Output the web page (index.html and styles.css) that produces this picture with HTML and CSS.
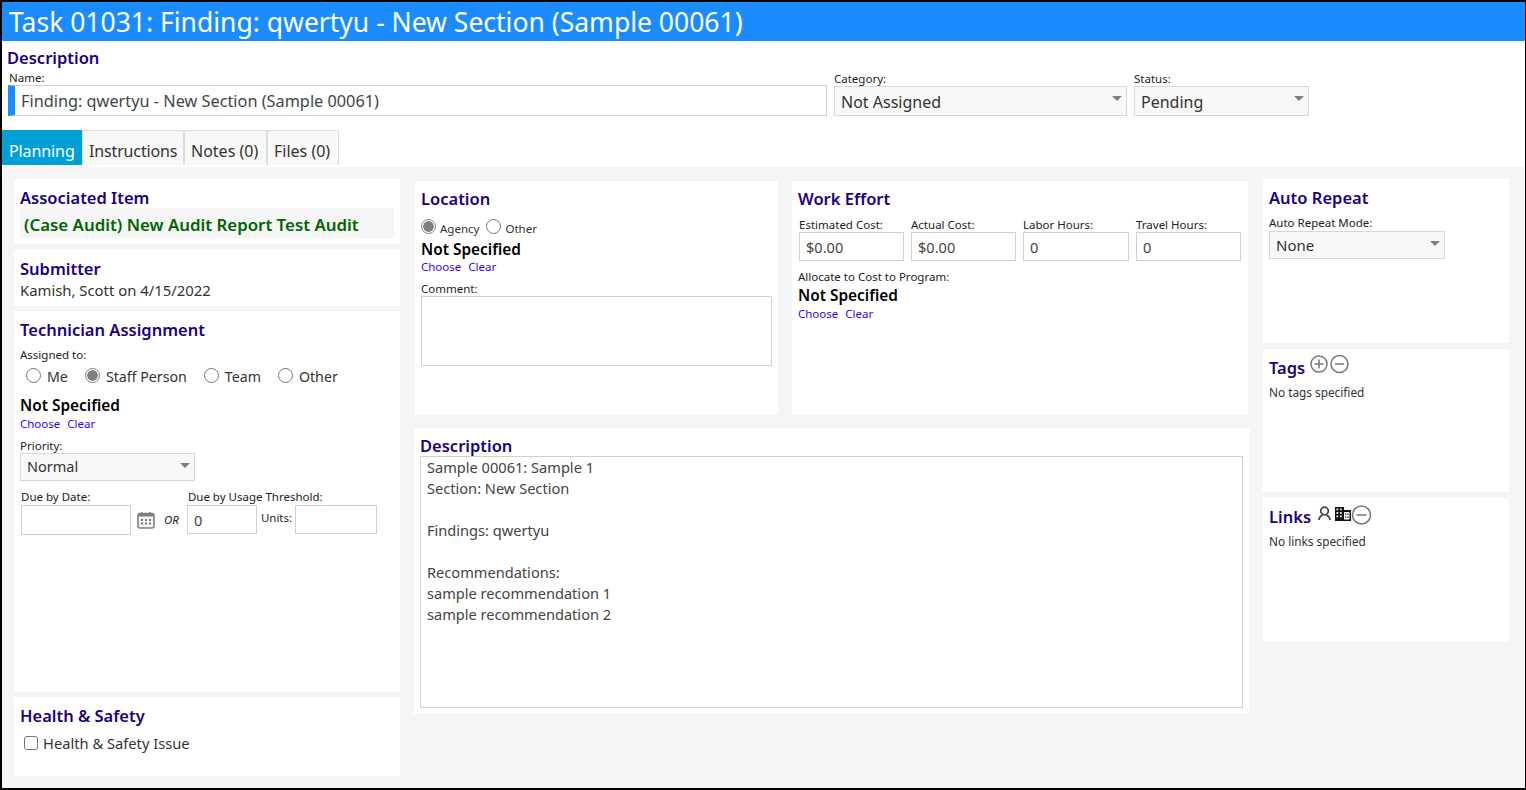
FILE: index.html
```html
<!DOCTYPE html>
<html lang="en">
<head>
  <meta charset="UTF-8">
  <title>Task 01031</title>
  <link rel="stylesheet" href="styles.css">
</head>
<body>
  <div class="window">
    <div class="title-bar">Task 01031: Finding: qwertyu - New Section (Sample 00061)</div>

    <div class="top-form">
      <h2 class="head">Description</h2>
      <div class="top-fields">
        <div class="field name-field">
          <label>Name:</label>
          <input class="txt name-input" type="text" value="Finding: qwertyu - New Section (Sample 00061)">
        </div>
        <div class="field category-field">
          <label>Category:</label>
          <div class="dropdown">Not Assigned</div>
        </div>
        <div class="field status-field">
          <label>Status:</label>
          <div class="dropdown">Pending</div>
        </div>
      </div>
    </div>

    <div class="tabs">
      <div class="tab active">Planning</div>
      <div class="tab">Instructions</div>
      <div class="tab">Notes (0)</div>
      <div class="tab">Files (0)</div>
    </div>

    <div class="panel">
      <!-- left column -->
      <div class="col col-left">
        <div class="card card-assoc">
          <h2 class="head">Associated Item</h2>
          <div class="assoc-item">(Case Audit) New Audit Report Test Audit</div>
        </div>
        <div class="card card-submitter">
          <h2 class="head">Submitter</h2>
          <div class="plain">Kamish, Scott on 4/15/2022</div>
        </div>
        <div class="card card-tech">
          <h2 class="head">Technician Assignment</h2>
          <label class="assigned-label">Assigned to:</label>
          <div class="assign-radios">
            <span class="opt"><input type="radio" name="assign">Me</span>
            <span class="opt"><input type="radio" name="assign" checked>Staff Person</span>
            <span class="opt"><input type="radio" name="assign">Team</span>
            <span class="opt"><input type="radio" name="assign">Other</span>
          </div>
          <div class="not-spec tech-spec">Not Specified</div>
          <div class="links"><a>Choose</a><a>Clear</a></div>
          <label class="priority-label">Priority:</label>
          <div class="dropdown priority">Normal</div>
          <div class="due-row">
            <div class="field">
              <label>Due by Date:</label>
              <input class="txt due-date" type="text">
            </div>
            <svg class="cal" width="18" height="18" viewBox="0 0 18 18">
              <rect x="1" y="2.5" width="16" height="14.5" rx="2" fill="#f4f4f4" stroke="#808080" stroke-width="1.6"/>
              <rect x="1" y="2.5" width="16" height="3" fill="#808080"/>
              <path d="M5 1v3M13 1v3" stroke="#808080" stroke-width="1.5"/>
              <path d="M4 8h2v2H4zM8 8h2v2H8zM12 8h2v2h-2zM4 11.5h2v2H4zM8 11.5h2v2H8zM12 11.5h2v2h-2z" fill="#777"/>
            </svg>
            <span class="or">OR</span>
            <div class="field usage-field">
              <label>Due by Usage Threshold:</label>
              <div class="usage-row">
                <input class="txt usage" type="text" value="0">
                <span class="units">Units:</span>
                <input class="txt units-input" type="text">
              </div>
            </div>
          </div>
        </div>
        <div class="card card-health">
          <h2 class="head">Health &amp; Safety</h2>
          <div class="check-row"><input type="checkbox">Health &amp; Safety Issue</div>
        </div>
      </div>

      <!-- middle column -->
      <div class="col col-mid">
        <div class="mid-top">
          <div class="card card-location">
            <h2 class="head">Location</h2>
            <div class="loc-radios">
              <input type="radio" name="loc" checked><span>Agency</span>
              <input type="radio" name="loc"><span>Other</span>
            </div>
            <div class="not-spec">Not Specified</div>
            <div class="links"><a>Choose</a><a>Clear</a></div>
            <label class="comment-label">Comment:</label>
            <textarea class="comment"></textarea>
          </div>
          <div class="card card-work">
            <h2 class="head">Work Effort</h2>
            <div class="cost-row">
              <div class="field"><label>Estimated Cost:</label><input class="txt cost" type="text" value="$0.00"></div>
              <div class="field"><label>Actual Cost:</label><input class="txt cost" type="text" value="$0.00"></div>
              <div class="field"><label>Labor Hours:</label><input class="txt cost cost-wide" type="text" value="0"></div>
              <div class="field"><label>Travel Hours:</label><input class="txt cost" type="text" value="0"></div>
            </div>
            <label class="alloc-label">Allocate to Cost to Program:</label>
            <div class="not-spec">Not Specified</div>
            <div class="links"><a>Choose</a><a>Clear</a></div>
          </div>
        </div>
        <div class="card card-desc">
          <h2 class="head">Description</h2>
          <div class="desc-box">Sample 00061: Sample 1
Section: New Section

Findings: qwertyu

Recommendations:
sample recommendation 1
sample recommendation 2</div>
        </div>
      </div>

      <!-- right column -->
      <div class="col col-right">
        <div class="card card-repeat">
          <h2 class="head">Auto Repeat</h2>
          <label class="repeat-label">Auto Repeat Mode:</label>
          <div class="dropdown repeat">None</div>
        </div>
        <div class="card card-tags">
          <div class="head-row">
            <h2 class="head">Tags</h2>
            <svg class="ico" width="40" height="20" viewBox="0 0 40 20">
              <circle cx="9" cy="9" r="8" fill="none" stroke="#777" stroke-width="1.5"/>
              <path d="M4.500 9h9M9 4.500v9" stroke="#777" stroke-width="1.5"/>
              <circle cx="29.500" cy="9" r="8.500" fill="none" stroke="#777" stroke-width="1.5"/>
              <path d="M25 9h9" stroke="#777" stroke-width="1.5"/>
            </svg>
          </div>
          <div class="small">No tags specified</div>
        </div>
        <div class="card card-links">
          <div class="head-row">
            <h2 class="head">Links</h2>
            <svg class="ico ico-links" width="54" height="22" viewBox="0 0 54 22">
              <circle cx="6.500" cy="7" r="3.800" fill="none" stroke="#444" stroke-width="1.700"/>
              <path d="M1 16c0-3 1.500-4 3.500-5M12 16c0-3-1.500-4-3.500-5" fill="none" stroke="#444" stroke-width="1.700"/>
              <path d="M17 3h9v3h7v11H17z" fill="#111"/>
              <path d="M26 8h5.500v7.500H26z" fill="#fff"/>
              <path d="M18.500 4.500h1.700v1.700h-1.700zM22 4.500h1.700v1.700H22zM18.500 8h1.700v1.700h-1.700zM22 8h1.700v1.700H22zM18.500 11.500h1.700v1.700h-1.700zM22 11.500h1.700v1.700H22z" fill="#fff"/>
              <path d="M27 9.500h1.300v1.300H27zM29.300 9.500h1.300v1.300h-1.300zM27 12.500h1.300v1.300H27zM29.300 12.500h1.300v1.300h-1.300z" fill="#111"/>
              <circle cx="43.500" cy="11" r="9" fill="none" stroke="#777" stroke-width="1.500"/>
              <path d="M38.500 11h10" stroke="#777" stroke-width="1.500"/>
            </svg>
          </div>
          <div class="small">No links specified</div>
        </div>
      </div>
    </div>
  </div>
</body>
</html>
```

FILE: styles.css
```css
* {
  box-sizing: border-box;
}
html, body {
  height: 100%;
}
body {
  margin: 0;
  background: #000;
  font-family: "Noto Sans", "Open Sans", sans-serif;
  font-size: 15px;
  color: #333;
}
.window {
  margin: 2px 1px 2px 2px;
  height: 786px;
  background: #fff;
  display: flex;
  flex-direction: column;
  overflow: hidden;
}
.title-bar {
  height: 39px;
  background: #1a8cff;
  color: #fff;
  font-size: 26.500px;
  line-height: 40px;
  padding-left: 7px;
  white-space: nowrap;
}
.head {
  margin: 0;
  font-size: 16.500px;
  line-height: 22px;
  font-weight: 600;
  color: #1c0080;
}
label {
  display: block;
  font-size: 11.500px;
  line-height: 14px;
  color: #222;
}
.top-form {
  padding: 6px 0 0 6px;
  height: 89px;
}
.top-form .head {
  margin-left: -1px;
}
.top-fields {
  display: flex;
  margin-top: 2px;
}
.name-field label,
.usage-field label {
  padding-left: 1px;
}
.name-field {
  width: 826px;
}
.category-field {
  width: 293px;
  margin: 1px 7px 0 0;
}
.status-field {
  width: 175px;
  margin-top: 1px;
}
.txt {
  display: block;
  height: 30px;
  border: 1px solid #d0d0d0;
  background: #fff;
  font: inherit;
  font-size: 14.600px;
  color: #444;
  padding: 0 6px;
  outline: none;
  border-radius: 0;
}
.name-input {
  width: 819px;
  height: 31px;
  border-left: 7px solid #1a8cff;
  padding: 1px 6px 0;
  font-size: 16.300px;
}
.dropdown {
  position: relative;
  height: 30px;
  border: 1px solid #d8d8d8;
  background: #f8f8f8;
  font-size: 16px;
  line-height: 31px;
  padding-left: 6px;
  color: #333;
}
.dropdown::after {
  content: "";
  position: absolute;
  right: 4px;
  top: 9px;
  border-left: 5px solid transparent;
  border-right: 5px solid transparent;
  border-top: 5px solid #808080;
}
.tabs {
  display: flex;
  height: 35px;
  flex-shrink: 0;
}
.tab {
  border: 1px solid #ddd;
  border-bottom: none;
  background: #f8f8f8;
  font-size: 16px;
  line-height: 40px;
  padding: 0 6px;
  color: #333;
  height: 35px;
  white-space: nowrap;
}
.tab.active {
  width: 80px;
  background: #009fd6;
  border-color: #009fd6;
  color: #fff;
  letter-spacing: -0.100px;
}
.tab:nth-child(2) { width: 102px; letter-spacing: -0.150px; }
.tab:nth-child(3) { width: 83px; }
.tab:nth-child(4) { width: 72px; }
.panel {
  flex: 1;
  background: #f5f5f5;
  display: flex;
  align-items: flex-start;
  padding: 12px 0 0 12px;
  margin-top: 2px;
}
.col {
  display: flex;
  flex-direction: column;
}
.col-left {
  width: 386px;
  margin-right: 14px;
  gap: 5px;
}
.col-mid {
  width: 835px;
  margin-right: 14px;
  gap: 14px;
}
.col-right {
  width: 246px;
  gap: 6px;
}
.card {
  background: #fff;
  padding: 8px 6px;
}
.card-assoc {
  height: 65px;
  margin-bottom: 1px;
  padding-top: 9px;
}
.card-assoc .head {
  line-height: 20px;
}
.card-submitter {
  height: 56px;
  padding-top: 8px;
}
.card-tech { height: 381px; }
.card-health { height: 79px; }
.assoc-item {
  background: #f5f5f5;
  height: 30px;
  padding-left: 4px;
  font-size: 16.850px;
  line-height: 33px;
  font-weight: 600;
  color: #006400;
  white-space: nowrap;
}
.plain {
  font-size: 14.850px;
  line-height: 20px;
}
.assigned-label {
  margin-top: 7px;
}
.assign-radios {
  display: flex;
  margin-top: 3px;
  padding-left: 6px;
  height: 24px;
  font-size: 14.200px;
  line-height: 24px;
}
.opt {
  display: flex;
  align-items: center;
  margin-right: 17px;
}
input[type="radio"] {
  appearance: none;
  width: 15px;
  height: 15px;
  margin: 0 6px 3px 0;
  border: 1px solid #767676;
  border-radius: 50%;
  background: #fff;
  flex-shrink: 0;
}
input[type="radio"]:checked {
  border-color: #808080;
  background: radial-gradient(circle, #808080 0 5px, #fff 5.500px);
}
.not-spec {
  font-size: 15.400px;
  line-height: 20px;
  font-weight: 600;
  color: #000;
}
.tech-spec {
  margin-top: 7px;
}
.links {
  display: flex;
  gap: 7px;
  font-size: 11.500px;
  line-height: 16px;
  color: #3300ff;
}
.priority-label {
  margin-top: 7px;
}
.priority {
  width: 175px;
  height: 28px;
  font-size: 14.500px;
  line-height: 25px;
}
.due-row {
  display: flex;
  align-items: flex-end;
  margin-top: 9px;
  padding-left: 1px;
}
.due-row label {
  margin-bottom: 1px;
}
.due-date {
  width: 110px;
}
.cal {
  margin: 0 0 6px 6px;
}
.or {
  font-size: 11.500px;
  font-style: italic;
  margin: 0 8px 8px 9px;
  color: #222;
}
.usage-row {
  display: flex;
  align-items: flex-start;
  margin-bottom: 1px;
}
.usage {
  width: 70px;
  height: 29px;
}
.units {
  font-size: 11.500px;
  color: #222;
  margin: 5px 3px 0 4px;
}
.units-input {
  width: 82px;
  height: 29px;
}
.check-row {
  display: flex;
  align-items: center;
  margin-top: 6px;
  padding-left: 4px;
  font-size: 14.700px;
}
input[type="checkbox"] {
  appearance: none;
  width: 14px;
  height: 14px;
  margin: 0 5px 0 0;
  border: 1px solid #767676;
  border-radius: 3px;
  background: #fff;
}
.mid-top {
  display: flex;
  padding-left: 1px;
  padding-top: 2px;
  gap: 14px;
}
.card-location {
  width: 363px;
  height: 233px;
  padding-top: 7px;
}
.loc-radios {
  display: flex;
  align-items: center;
  margin-top: 8px;
  height: 18px;
  font-size: 11.500px;
}
.loc-radios span {
  margin: 3px 7px 0 -2px;
}
.loc-radios input {
  margin: 0 6px 2px 0;
}
.card-location .not-spec {
  margin-top: 4px;
}
.card-location .links {
  margin-top: -1px;
}
.comment-label {
  margin-top: 7px;
}
.comment {
  display: block;
  width: 351px;
  height: 70px;
  border: 1px solid #d0d0d0;
  resize: none;
  outline: none;
  border-radius: 0;
}
.card-work {
  width: 456px;
  height: 233px;
  padding-top: 7px;
}
.cost-row {
  display: flex;
  gap: 7px;
  margin-top: 8px;
  padding-left: 1px;
}
.cost {
  width: 105px;
  height: 29px;
}
.cost-wide {
  width: 106px;
}
.alloc-label {
  margin-top: 9px;
}
.card-work .not-spec {
  margin-top: 2px;
}
.card-desc {
  height: 286px;
  padding-top: 7px;
}
.card-desc .head {
  line-height: 21px;
}
.desc-box {
  height: 252px;
  border: 1px solid #d0d0d0;
  padding: 0 6px;
  font-size: 14.600px;
  line-height: 21px;
  white-space: pre-line;
  color: #444;
}
.card-repeat { height: 164px; }
.card-tags { height: 143px; }
.card-links { height: 144px; }
.repeat-label {
  margin-top: 7px;
}
.repeat {
  width: 176px;
  height: 28px;
  margin-top: 1px;
  font-size: 15px;
  line-height: 27px;
}
.head-row {
  display: flex;
  align-items: flex-start;
}
.ico {
  margin: -2px 0 0 5px;
}
.ico-links {
  margin-left: 7px;
}
.small {
  margin-top: 5px;
  font-size: 11.800px;
  line-height: 16px;
  color: #333;
}
```
